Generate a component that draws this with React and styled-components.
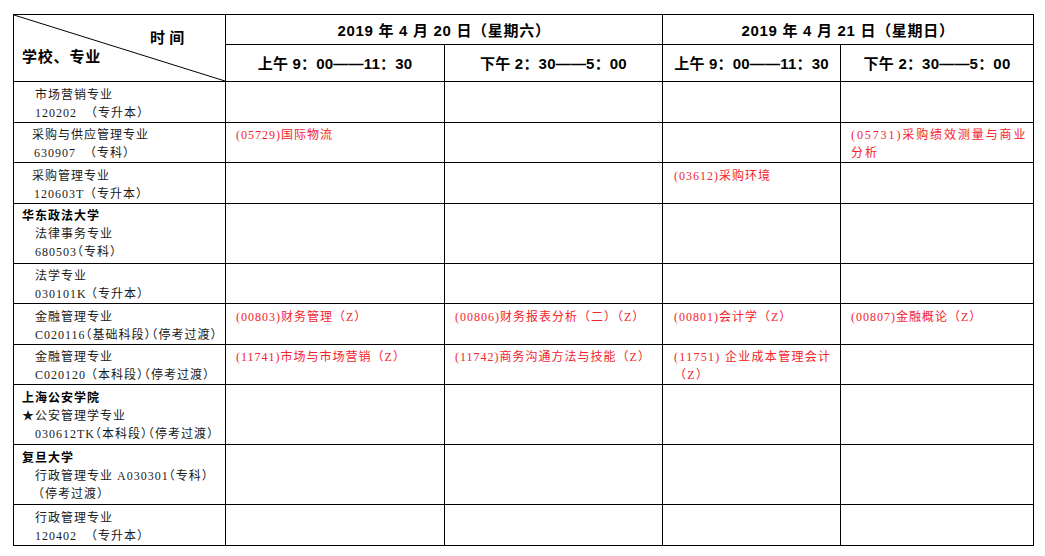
import React from "react";
import styled, { createGlobalStyle } from "styled-components";

const Global = createGlobalStyle`
  html, body { margin: 0; padding: 0; background: #fff; }
`;

const Page = styled.div`
  padding: 14px 0 0 13px;
`;

const Table = styled.table`
  border-collapse: collapse;
  table-layout: fixed;
  width: 1020px;
  font-family: "Liberation Serif", "Noto Sans CJK SC", serif;
  font-size: 12px;
  color: #1a1a1a;
`;

const HeadRow = styled.tr`
  height: ${(p) => p.$h}px;
`;

const CornerCell = styled.th`
  position: relative;
  border: 1px solid #000;
  padding: 13px 0 0 0;
  vertical-align: top;
  text-align: left;
  font-family: "Liberation Sans", "Noto Sans CJK SC", sans-serif;
  font-size: 15px;
  font-weight: bold;
  color: #000;
`;

const Diagonal = styled.svg`
  position: absolute;
  left: 0;
  top: 0;
  width: 100%;
  height: 100%;
  pointer-events: none;
`;

const CornerTime = styled.div`
  line-height: 20px;
  padding-left: 136px;
  white-space: pre;
`;

const CornerSchool = styled.div`
  line-height: 18px;
  padding-left: 8px;
  letter-spacing: 0.8px;
`;

const HeadCell = styled.th`
  border: 1px solid #000;
  padding: 0 0 1px;
  text-align: center;
  vertical-align: middle;
  font-family: "Liberation Sans", "Noto Sans CJK SC", sans-serif;
  font-size: ${(p) => p.$size || 15}px;
  letter-spacing: ${(p) => p.$ls || 0}px;
  font-weight: bold;
  color: #000;
  white-space: nowrap;
`;

const Row = styled.tr`
  height: ${(p) => (p.$lines === 3 ? 60 : 40.5)}px;
`;

const NameCell = styled.td`
  border: 1px solid #000;
  vertical-align: top;
  padding: 3.5px 0 0 8px;
  line-height: 18px;
  letter-spacing: 1px;
  font-feature-settings: "halt";
  white-space: nowrap;
  overflow: hidden;
`;

const School = styled.div`
  font-family: "Liberation Serif", "Noto Sans CJK SC", serif;
  font-weight: bold;
  color: #000;
`;

const Line = styled.div`
  padding-left: ${(p) => (p.$indent == null ? 13 : p.$indent)}px;
`;

const Code = styled.span`
  display: inline-block;
  min-width: ${(p) => (p.$tab ? "56px" : "0")};
`;

const ExamCell = styled.td`
  border: 1px solid #000;
  vertical-align: top;
  padding: 3.5px 4px 0 ${(p) => p.$pad || 10}px;
  line-height: 18px;
  letter-spacing: ${(p) => p.$ls || 1}px;
  color: #f5222d;
  white-space: nowrap;
`;

const sessions = [
  "上午 9：00——11：30",
  "下午 2：30——5：00",
  "上午 9：00——11：30",
  "下午 2：30——5：00",
];

const rows = [
  {
    lines: 2,
    name: (
      <>
        <Line>市场营销专业</Line>
        <Line>
          <Code $tab>120202</Code>（专升本）
        </Line>
      </>
    ),
    exams: [null, null, null, null],
  },
  {
    lines: 2,
    name: (
      <>
        <Line $indent={10}>采购与供应管理专业</Line>
        <Line $indent={12}>
          <Code $tab>630907</Code>（专科）
        </Line>
      </>
    ),
    exams: [
      "(05729)国际物流",
      null,
      null,
      {
        ls: 1.9,
        text: (
          <>
            (05731)采购绩效测量与商业
            <br />
            分析
          </>
        ),
      },
    ],
  },
  {
    lines: 2,
    name: (
      <>
        <Line $indent={10}>采购管理专业</Line>
        <Line $indent={12}>
          <Code $tab>120603T</Code>（专升本）
        </Line>
      </>
    ),
    exams: [null, null, "(03612)采购环境", null],
  },
  {
    lines: 3,
    name: (
      <>
        <School>华东政法大学</School>
        <Line>法律事务专业</Line>
        <Line>
          <Code>680503</Code>（专科）
        </Line>
      </>
    ),
    exams: [null, null, null, null],
  },
  {
    lines: 2,
    name: (
      <>
        <Line>法学专业</Line>
        <Line>
          <Code $tab>030101K</Code>（专升本）
        </Line>
      </>
    ),
    exams: [null, null, null, null],
  },
  {
    lines: 2,
    name: (
      <>
        <Line>金融管理专业</Line>
        <Line>
          <Code>C020116</Code>（基础科段）（停考过渡）
        </Line>
      </>
    ),
    exams: [
      "(00803)财务管理（Z）",
      "(00806)财务报表分析（二）（Z）",
      "(00801)会计学（Z）",
      "(00807)金融概论（Z）",
    ],
  },
  {
    lines: 2,
    name: (
      <>
        <Line>金融管理专业</Line>
        <Line>
          <Code $tab>C020120</Code>（本科段）（停考过渡）
        </Line>
      </>
    ),
    exams: [
      "(11741)市场与市场营销（Z）",
      "(11742)商务沟通方法与技能（Z）",
      {
        ls: 1.3,
        text: (
          <>
            (11751) 企业成本管理会计
            <br />
            （Z）
          </>
        ),
      },
      null,
    ],
  },
  {
    lines: 3,
    name: (
      <>
        <School>上海公安学院</School>
        <Line $indent={0}>★公安管理学专业</Line>
        <Line>
          <Code>030612TK</Code>（本科段）（停考过渡）
        </Line>
      </>
    ),
    exams: [null, null, null, null],
  },
  {
    lines: 3,
    name: (
      <>
        <School>复旦大学</School>
        <Line>行政管理专业 A030301（专科）</Line>
        <Line $indent={16}>（停考过渡）</Line>
      </>
    ),
    exams: [null, null, null, null],
  },
  {
    lines: 2,
    name: (
      <>
        <Line>行政管理专业</Line>
        <Line>
          <Code $tab>120402</Code>（专升本）
        </Line>
      </>
    ),
    exams: [null, null, null, null],
  },
];

const examPads = [10, 10, 11, 10];

export default function App() {
  return (
    <Page>
      <Global />
      <Table>
        <colgroup>
          <col style={{ width: 212 }} />
          <col style={{ width: 219 }} />
          <col style={{ width: 218 }} />
          <col style={{ width: 178 }} />
          <col style={{ width: 193 }} />
        </colgroup>
        <thead>
          <HeadRow $h={30}>
            <CornerCell rowSpan={2}>
              <Diagonal preserveAspectRatio="none" viewBox="0 0 100 100">
                <line
                  x1="0"
                  y1="0"
                  x2="100"
                  y2="100"
                  stroke="#000"
                  strokeWidth="1"
                  vectorEffect="non-scaling-stroke"
                />
              </Diagonal>
              <CornerTime>时 间</CornerTime>
              <CornerSchool>学校、专业</CornerSchool>
            </CornerCell>
            <HeadCell colSpan={2} $size={15} $ls={0.7}>
              2019 年 4 月 20 日（星期六）
            </HeadCell>
            <HeadCell colSpan={2} $size={15} $ls={0.7}>
              2019 年 4 月 21 日（星期日）
            </HeadCell>
          </HeadRow>
          <HeadRow $h={37}>
            {sessions.map((s, i) => (
              <HeadCell key={i} $size={15} $ls={0.2}>
                {s}
              </HeadCell>
            ))}
          </HeadRow>
        </thead>
        <tbody>
          {rows.map((r, i) => (
            <Row key={i} $lines={r.lines}>
              <NameCell>{r.name}</NameCell>
              {r.exams.map((e, j) => {
                const obj = e && typeof e === "object" && "text" in e ? e : null;
                return (
                  <ExamCell key={j} $pad={examPads[j]} $ls={obj ? obj.ls : 1}>
                    {obj ? obj.text : e}
                  </ExamCell>
                );
              })}
            </Row>
          ))}
        </tbody>
      </Table>
    </Page>
  );
}
